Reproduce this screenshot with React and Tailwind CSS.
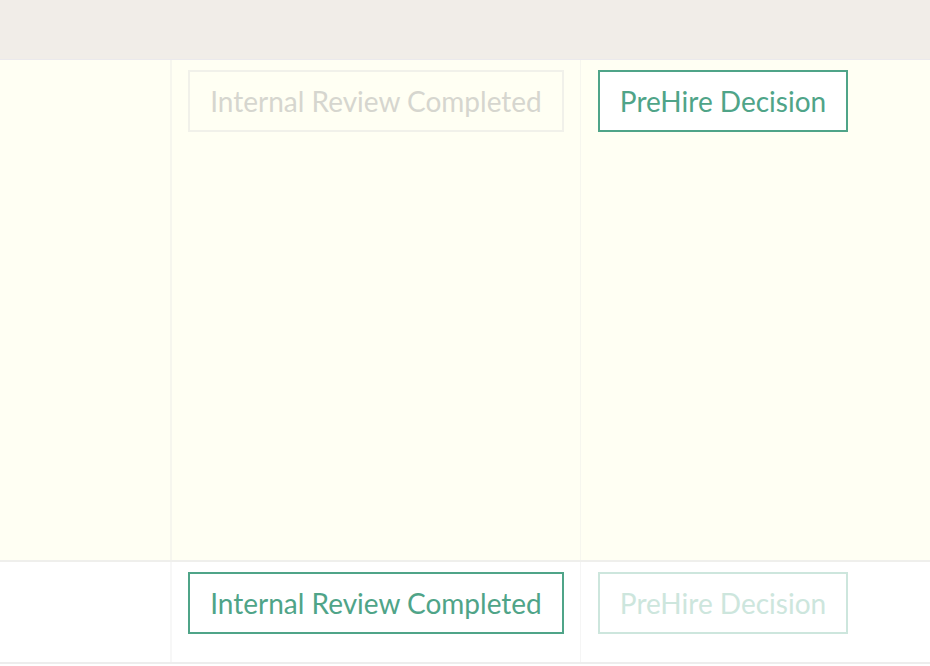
export default function App() {
  const font = { fontFamily: "Lato, 'Open Sans', sans-serif" };
  return (
    <div className="w-[930px] h-[666px] overflow-hidden bg-white" style={font}>
      <div className="h-[60px] bg-[#f1ede8] border-b border-[#ebe9ec]" />
      <div className="flex h-[502px] bg-[#fffff3] border-b-2 border-[#efefec]">
        <div className="w-[172px] shrink-0 border-r-2 border-[#f6f6ee]" />
        <div className="w-[409px] shrink-0 border-r border-[#f6f6ee] pl-[16px] pt-[10px]">
          <div className="h-[62px] w-[376px] border-2 border-[#f1f1ea] flex items-center justify-center text-[28px] text-[#d6d6cf]">
            Internal Review Completed
          </div>
        </div>
        <div className="flex-1 pl-[17px] pt-[10px]">
          <div className="h-[62px] w-[250px] border-2 border-[#4fa488] bg-white flex items-center justify-center text-[28px] text-[#4fa488]">
            PreHire Decision
          </div>
        </div>
      </div>
      <div className="flex h-[102px] bg-white border-b-2 border-[#ededed]">
        <div className="w-[172px] shrink-0 border-r-2 border-[#f7f7f7]" />
        <div className="w-[409px] shrink-0 border-r border-[#f5f5f5] pl-[16px] pt-[10px]">
          <div className="h-[62px] w-[376px] border-2 border-[#4fa488] bg-white flex items-center justify-center text-[28px] text-[#4fa488]">
            Internal Review Completed
          </div>
        </div>
        <div className="flex-1 pl-[17px] pt-[10px]">
          <div className="h-[62px] w-[250px] border-2 border-[#cde6dd] bg-white flex items-center justify-center text-[28px] text-[#cde6dd]">
            PreHire Decision
          </div>
        </div>
      </div>
    </div>
  );
}
